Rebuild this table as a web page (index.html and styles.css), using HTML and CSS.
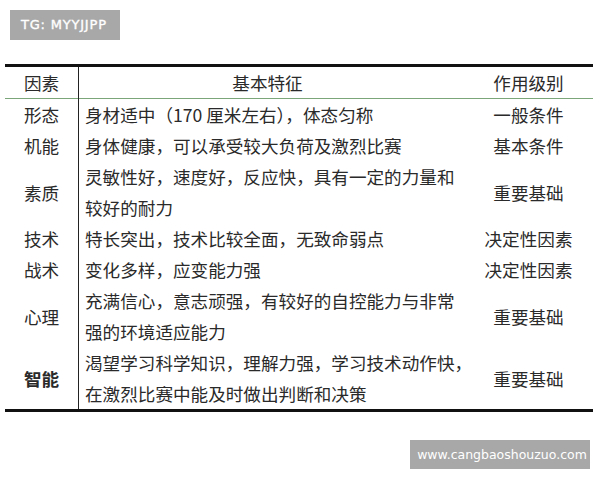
FILE: index.html
```html
<!DOCTYPE html>
<html lang="zh">
<head>
<meta charset="utf-8">
<link rel="stylesheet" href="styles.css">
</head>
<body>
<div class="page">
  <div class="badge">TG: MYYJJPP</div>
  <table class="tbl">
    <thead>
      <tr><th class="c1">因素</th><th class="c2">基本特征</th><th class="c3">作用级别</th></tr>
    </thead>
    <tbody>
      <tr><td class="c1">形态</td><td class="c2">身材适中（170 厘米左右），体态匀称</td><td class="c3">一般条件</td></tr>
      <tr><td class="c1">机能</td><td class="c2">身体健康，可以承受较大负荷及激烈比赛</td><td class="c3">基本条件</td></tr>
      <tr><td class="c1">素质</td><td class="c2">灵敏性好，速度好，反应快，具有一定的力量和<br>较好的耐力</td><td class="c3">重要基础</td></tr>
      <tr><td class="c1">技术</td><td class="c2">特长突出，技术比较全面，无致命弱点</td><td class="c3">决定性因素</td></tr>
      <tr><td class="c1">战术</td><td class="c2">变化多样，应变能力强</td><td class="c3">决定性因素</td></tr>
      <tr><td class="c1">心理</td><td class="c2">充满信心，意志顽强，有较好的自控能力与非常<br>强的环境适应能力</td><td class="c3">重要基础</td></tr>
      <tr><td class="c1 bold">智能</td><td class="c2">渴望学习科学知识，理解力强，学习技术动作快，<br>在激烈比赛中能及时做出判断和决策</td><td class="c3">重要基础</td></tr>
    </tbody>
  </table>
  <div class="footer"><div class="site">www.cangbaoshouzuo.com</div></div>
</div>
</body>
</html>
```
FILE: styles.css
```css
html, body { margin: 0; padding: 0; background: #ffffff; }
.page { width: 600px; height: 480px; position: relative; overflow: hidden; padding-top: 10px; box-sizing: border-box; }
.badge {
  margin-left: 10px; width: 110px; height: 30px; background: #a8a8a8; color: #ffffff;
  font-family: "DejaVu Sans", sans-serif; font-size: 13px; font-weight: normal;
  line-height: 30px; box-sizing: border-box; padding-left: 11px; letter-spacing: 0.8px;
  -webkit-text-stroke: 0.35px #ffffff;
}
.tbl {
  margin-top: 24px; margin-left: 5px; width: 588px; border-collapse: collapse; table-layout: fixed;
  font-family: "Noto Sans CJK SC", sans-serif; font-size: 17.6px; color: #2a2a2a;
  border-top: 3px solid #111; border-bottom: 3px solid #111;
}
.tbl th, .tbl td { padding: 0; line-height: 31px; font-weight: normal; vertical-align: middle; white-space: nowrap; }
.tbl thead tr { border-bottom: 1px solid #7aa67a; }
.c1 { width: 73px; text-align: center; border-right: 1.5px solid #222; }
.c2 { width: 377px; text-align: left; padding-left: 6px !important; overflow: visible; }
.tbl th.c2 { text-align: center; padding-left: 0 !important; }
.c3 { text-align: center; padding-left: 8px !important; }
.bold { font-weight: bold !important; }
.footer { display: flex; justify-content: flex-end; margin-top: 28px; padding-right: 10px; }
.site {
  width: 180px; height: 29px; background: #a8a8a8; color: #fff;
  font-family: "DejaVu Sans", sans-serif; font-size: 12.5px; line-height: 29px; text-align: center;
  padding-left: 4px; box-sizing: border-box;
}
```
